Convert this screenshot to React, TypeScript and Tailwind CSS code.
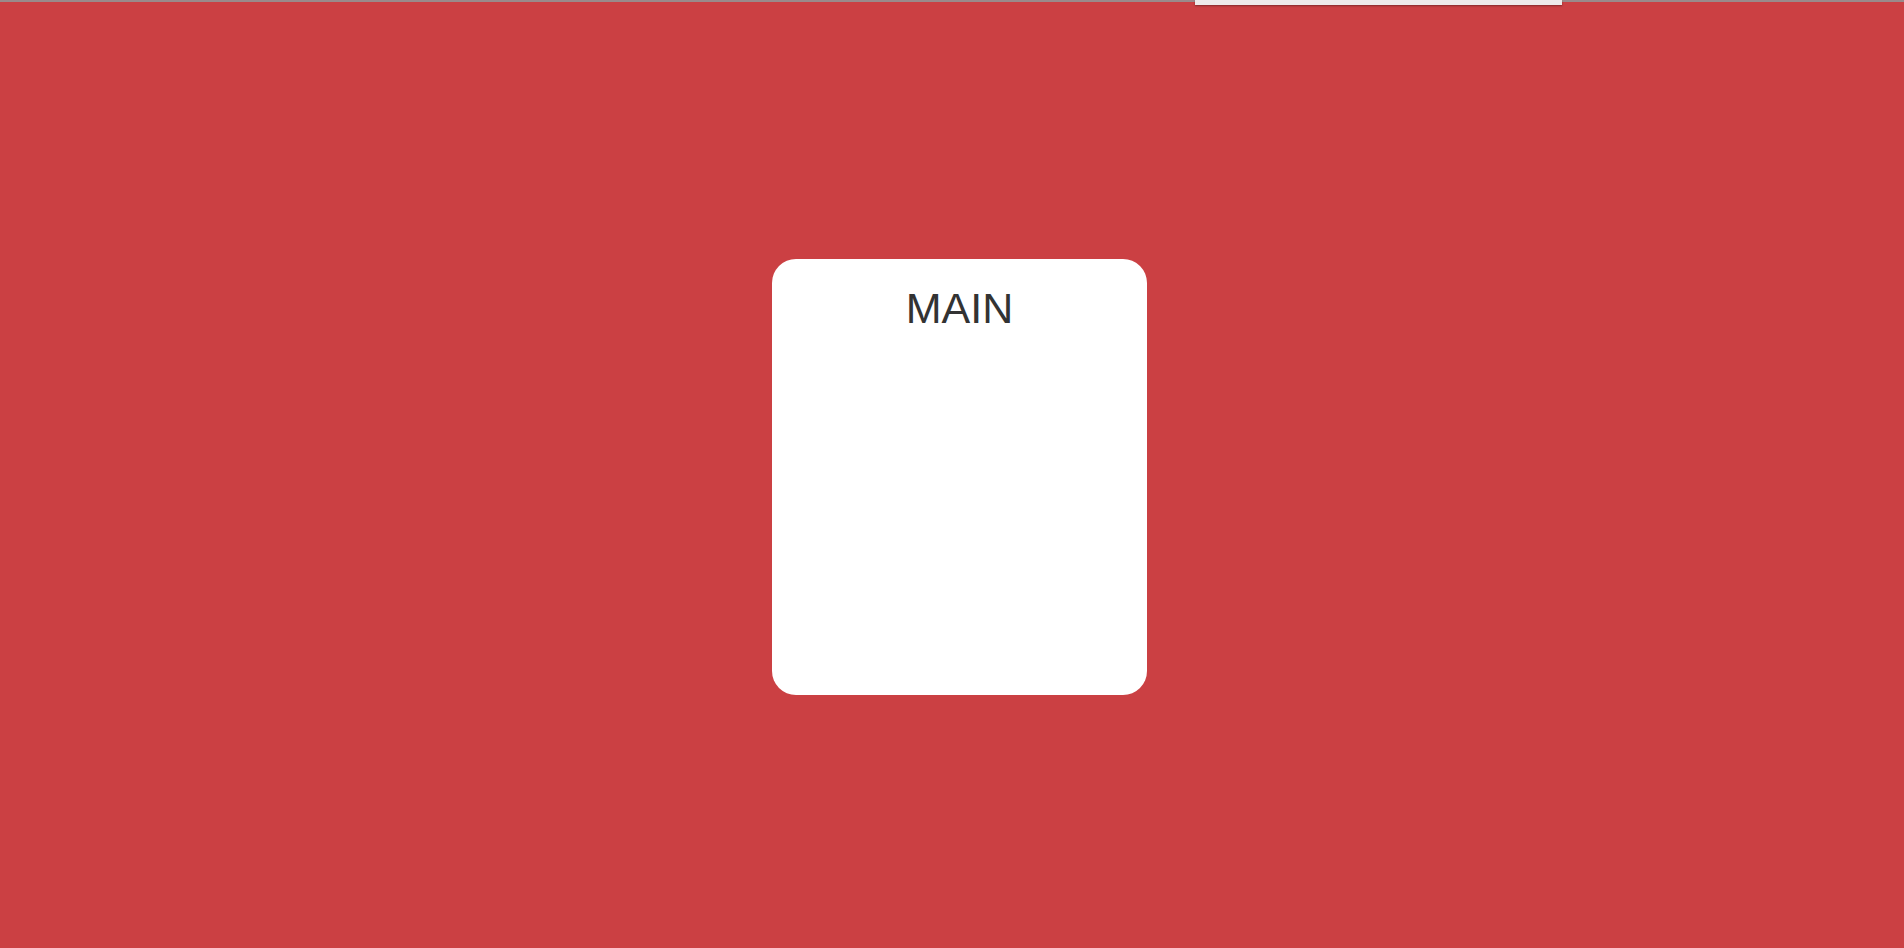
export default function App() {
  return (
    <main className="relative flex min-h-screen flex-col bg-[#cb4043] font-['Liberation_Sans',Arial,sans-serif]">
      <div className="relative h-[2px] w-full bg-[#9a8a8b]">
        <div className="absolute left-[1195px] top-0 h-[5px] w-[367px] bg-[#eeeaea] shadow-[0_1px_2px_rgba(0,0,0,0.35)]" />
      </div>
      <section className="flex flex-1 items-center justify-center pl-[15px] pt-[4px]">
        <div className="flex h-[436px] w-[375px] flex-col items-center rounded-[24px] bg-white pt-[25px]">
          <h1 className="text-[43px] font-normal leading-[1.15] text-[#333333]">MAIN</h1>
        </div>
      </section>
    </main>
  );
}
